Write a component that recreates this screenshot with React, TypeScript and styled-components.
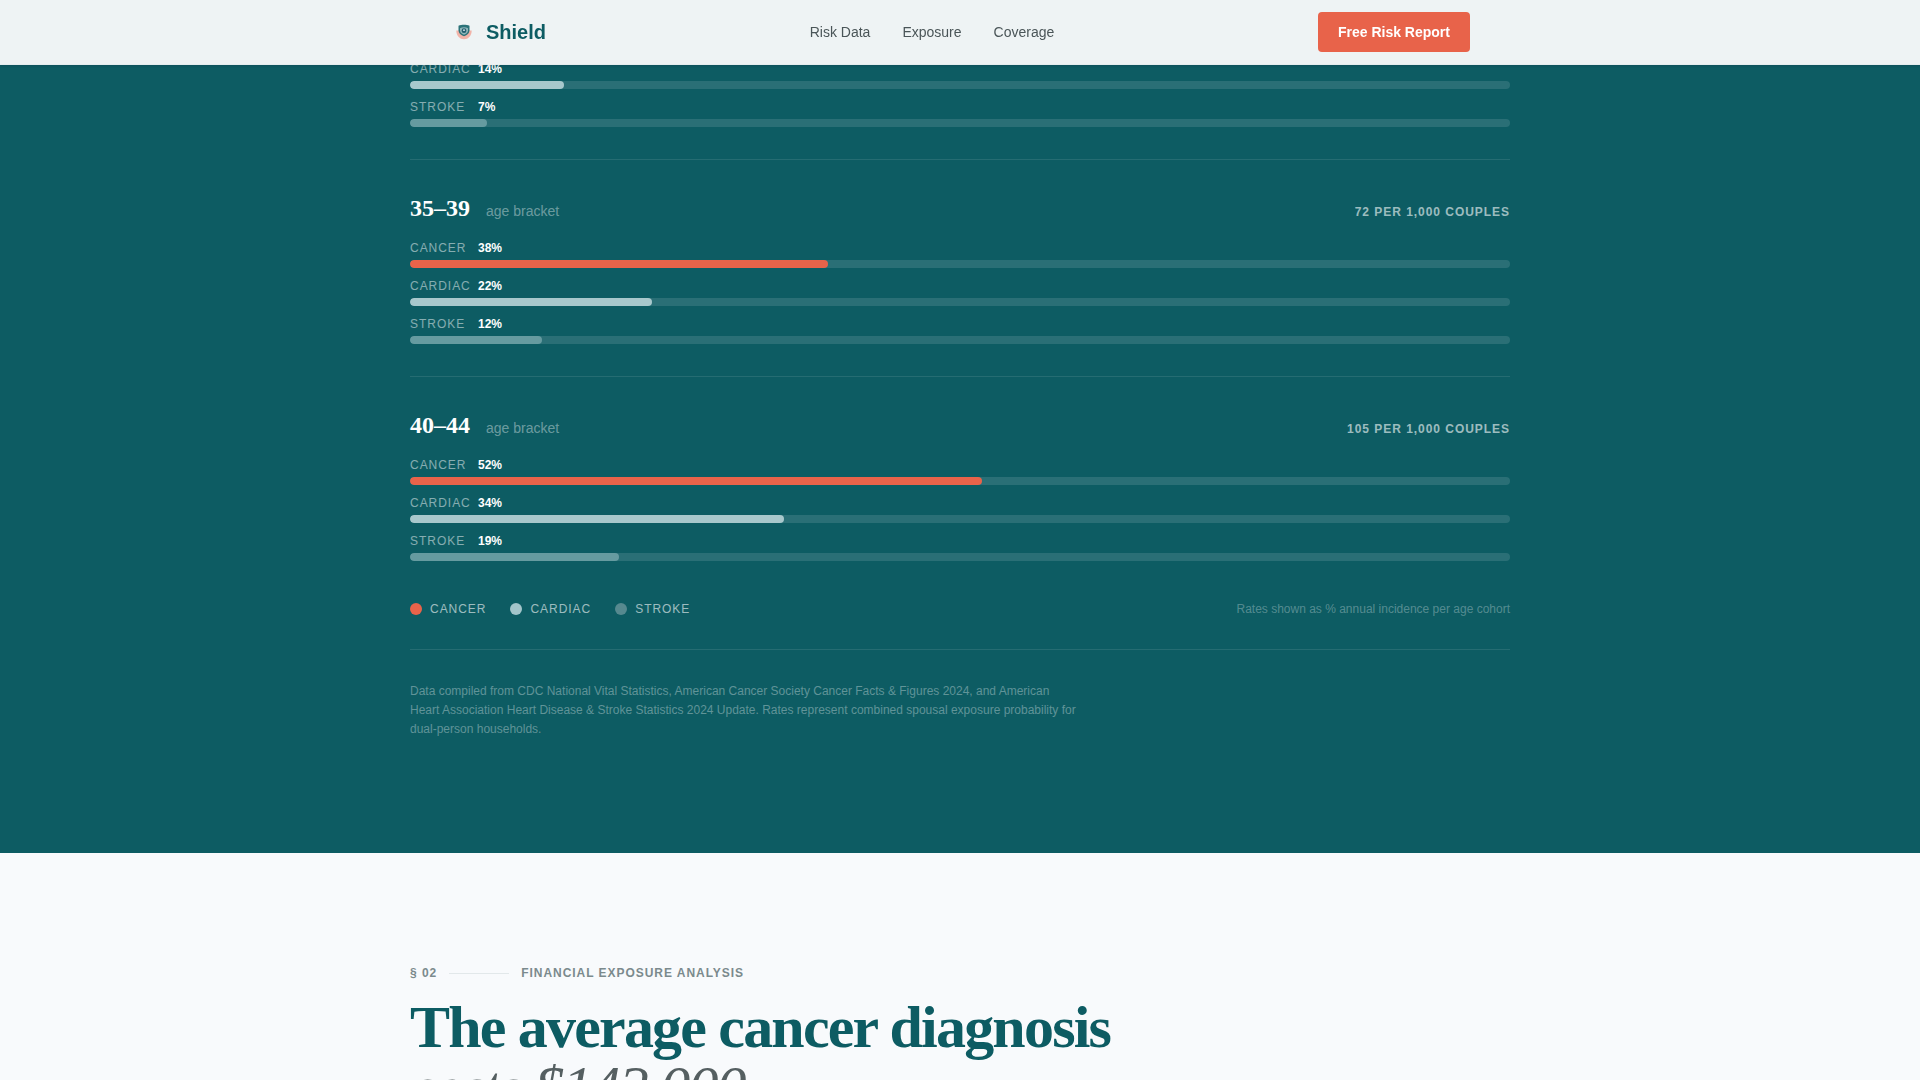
import React from "react";
import styled, { createGlobalStyle } from "styled-components";

const sans = `"Liberation Sans", Arial, sans-serif`;
const serif = `"Liberation Serif", "Times New Roman", serif`;

const teal = "#0d5c63";
const coral = "#e8634a";

const GlobalStyle = createGlobalStyle`
  *, *::before, *::after { box-sizing: border-box; }
  html { overflow: hidden; }
  body {
    margin: 0;
    height: 100vh;
    overflow: hidden;
    background: #f8fafc;
    font-family: ${sans};
    font-size: 16px;
    line-height: 24px;
  }
  h2, h3, p, ul { margin: 0; padding: 0; }
  ul { list-style: none; }
`;

const NavBar = styled.header`
  position: fixed;
  inset: 0 0 auto 0;
  z-index: 10;
  background: rgba(248, 250, 250, 0.96);
  border-bottom: 1px solid rgba(13, 92, 99, 0.04);
  box-shadow: 0 1px 2px rgba(20, 30, 60, 0.2);
`;

const NavInner = styled.div`
  display: flex;
  align-items: center;
  justify-content: space-between;
  max-width: 1100px;
  margin: 0 auto;
  padding: 12px 40px;
`;

const Brand = styled.a`
  display: flex;
  align-items: center;
  gap: 8px;
  color: ${teal};
  font-size: 20px;
  font-weight: 700;
  line-height: 28px;
  text-decoration: none;
`;

const NavLinks = styled.nav`
  display: flex;
  gap: 32px;
`;

const NavLink = styled.a`
  color: #4a5558;
  font-size: 14px;
  line-height: 20px;
  text-decoration: none;
`;

const ReportButton = styled.button`
  height: 40px;
  padding: 0 20px;
  border: 0;
  border-radius: 4px;
  background: ${coral};
  color: #fff;
  font-family: inherit;
  font-size: 14px;
  font-weight: 700;
  cursor: pointer;
`;

const RiskSection = styled.section`
  padding: 59px 40px 114px;
  background: ${teal};
`;

const Container = styled.div`
  max-width: 1100px;
  margin: 0 auto;
`;

const Bracket = styled.article`
  padding-bottom: 32px;
  border-bottom: 1px solid rgba(255, 255, 255, 0.1);

  & + & { padding-top: 32px; }
  &:last-of-type { padding-bottom: 0; border-bottom: 0; }
`;

const BracketHead = styled.div`
  display: flex;
  align-items: baseline;
  gap: 16px;
  margin-bottom: 14px;
`;

const BracketTitle = styled.h3`
  color: #fff;
  font-family: ${serif};
  font-size: 24px;
  font-weight: 700;
  line-height: 32px;
`;

const BracketHint = styled.span`
  color: rgba(255, 255, 255, 0.4);
  font-size: 14px;
  line-height: 20px;
`;

const BracketTotal = styled.span`
  margin-left: auto;
  color: rgba(255, 255, 255, 0.6);
  font-size: 12px;
  font-weight: 700;
  letter-spacing: 0.08em;
  line-height: 20px;
  text-transform: uppercase;
`;

const Rates = styled.div`
  display: grid;
  gap: 8px;
`;

const RateLabel = styled.div`
  display: flex;
  gap: 8px;
  margin-bottom: 2px;
  font-size: 12px;
  line-height: 20px;
`;

const RateName = styled.span`
  width: 60px;
  color: rgba(255, 255, 255, 0.5);
  letter-spacing: 0.08em;
  text-transform: uppercase;
`;

const RateValue = styled.strong`
  color: #fff;
`;

const Track = styled.div`
  height: 8px;
  overflow: hidden;
  border-radius: 4px;
  background: rgba(255, 255, 255, 0.12);
`;

const Fill = styled.div<{ $color: string }>`
  height: 100%;
  border-radius: 4px;
  background: ${(p) => p.$color};
`;

const LegendRow = styled.div`
  display: flex;
  align-items: center;
  justify-content: space-between;
  margin-top: 40px;
  padding-bottom: 32px;
  border-bottom: 1px solid rgba(255, 255, 255, 0.1);
  font-size: 12px;
  line-height: 16px;
`;

const Legend = styled.ul`
  display: flex;
  gap: 24px;
`;

const LegendItem = styled.li`
  display: flex;
  align-items: center;
  gap: 8px;
  color: rgba(255, 255, 255, 0.6);
  letter-spacing: 0.08em;
  text-transform: uppercase;
`;

const Dot = styled.span<{ $color: string }>`
  width: 12px;
  height: 12px;
  border-radius: 50%;
  background: ${(p) => p.$color};
`;

const LegendNote = styled.span`
  color: rgba(255, 255, 255, 0.3);
`;

const Sources = styled.p`
  max-width: 672px;
  padding-top: 32px;
  color: rgba(255, 255, 255, 0.35);
  font-size: 12px;
  line-height: 19px;
`;

const ExposureSection = styled.section`
  padding: 112px 40px;
  background: #f8fafc;
`;

const Eyebrow = styled.div`
  display: flex;
  align-items: center;
  gap: 12px;
  margin-bottom: 16px;
  color: #7b8a8d;
  font-size: 12px;
  font-weight: 700;
  letter-spacing: 0.08em;
  line-height: 16px;
  text-transform: uppercase;
`;

const Rule = styled.span`
  width: 60px;
  height: 1px;
  background: #e2e8ea;
`;

const Headline = styled.h2`
  color: ${teal};
  font-family: ${serif};
  font-size: 60px;
  font-weight: 700;
  letter-spacing: -0.03em;
  line-height: 60px;
`;

const HeadlineAccent = styled.em`
  display: block;
  color: #555f61;
  font-weight: 400;
`;

type Kind = "cancer" | "cardiac" | "stroke";

const colors: Record<Kind, string> = {
  cancer: coral,
  cardiac: "#a8c8cc",
  stroke: "#669ba0",
};

const dotColors: Record<Kind, string> = {
  cancer: coral,
  cardiac: "#a2c5ca",
  stroke: "#56898f",
};

const kinds: Kind[] = ["cancer", "cardiac", "stroke"];

interface BracketData {
  ages?: string;
  total?: string;
  rates: { kind: Kind; value: number }[];
}

const brackets: BracketData[] = [
  {
    rates: [
      { kind: "cardiac", value: 14 },
      { kind: "stroke", value: 7 },
    ],
  },
  {
    ages: "35–39",
    total: "72 per 1,000 couples",
    rates: [
      { kind: "cancer", value: 38 },
      { kind: "cardiac", value: 22 },
      { kind: "stroke", value: 12 },
    ],
  },
  {
    ages: "40–44",
    total: "105 per 1,000 couples",
    rates: [
      { kind: "cancer", value: 52 },
      { kind: "cardiac", value: 34 },
      { kind: "stroke", value: 19 },
    ],
  },
];

function ShieldLogo() {
  return (
    <svg width="28" height="28" viewBox="0 0 28 28" aria-hidden="true">
      <path d="M6.300 12.500c0 5 3.300 8.800 7.700 8.800s7.700-3.800 7.700-8.800z" fill="#f1b3a8" />
      <path d="M14 6.700c-2 0-4 .3-5.500 1v4.500c0 3 2.300 5 5.500 6 3.200-1 5.500-3 5.500-6V7.700c-1.500-.7-3.500-1-5.500-1z" fill="#2b7278" />
      <path d="M10 10.200c1.200-.6 2.500-.9 4-.9s2.800.3 4 .9v2.300c0 2-1.600 3.400-4 4.200-2.400-.8-4-2.200-4-4.200z" fill="#8fb5b9" />
      <circle cx="14" cy="12.700" r="2.400" fill="#245f70" />
      <circle cx="14" cy="12.200" r="0.900" fill="#d7e8ea" />
    </svg>
  );
}

function RateRow({ kind, value }: { kind: Kind; value: number }) {
  return (
    <div>
      <RateLabel>
        <RateName>{kind}</RateName>
        <RateValue>{value}%</RateValue>
      </RateLabel>
      <Track>
        <Fill $color={colors[kind]} style={{ width: `${value}%` }} />
      </Track>
    </div>
  );
}

export default function App() {
  return (
    <>
      <GlobalStyle />
      <NavBar>
        <NavInner>
          <Brand href="#top">
            <ShieldLogo />
            Shield
          </Brand>
          <NavLinks>
            <NavLink href="#risk">Risk Data</NavLink>
            <NavLink href="#exposure">Exposure</NavLink>
            <NavLink href="#coverage">Coverage</NavLink>
          </NavLinks>
          <ReportButton type="button">Free Risk Report</ReportButton>
        </NavInner>
      </NavBar>
      <main>
        <RiskSection id="risk">
          <Container>
            {brackets.map((b, i) => (
              <Bracket key={i}>
                {b.ages && (
                  <BracketHead>
                    <BracketTitle>{b.ages}</BracketTitle>
                    <BracketHint>age bracket</BracketHint>
                    <BracketTotal>{b.total}</BracketTotal>
                  </BracketHead>
                )}
                <Rates>
                  {b.rates.map((r) => (
                    <RateRow key={r.kind} kind={r.kind} value={r.value} />
                  ))}
                </Rates>
              </Bracket>
            ))}
            <LegendRow>
              <Legend>
                {kinds.map((k) => (
                  <LegendItem key={k}>
                    <Dot $color={dotColors[k]} />
                    {k}
                  </LegendItem>
                ))}
              </Legend>
              <LegendNote>Rates shown as % annual incidence per age cohort</LegendNote>
            </LegendRow>
            <Sources>
              Data compiled from CDC National Vital Statistics, American Cancer Society Cancer Facts &amp; Figures
              2024, and American Heart Association Heart Disease &amp; Stroke Statistics 2024 Update. Rates represent
              combined spousal exposure probability for dual-person households.
            </Sources>
          </Container>
        </RiskSection>
        <ExposureSection id="exposure">
          <Container>
            <Eyebrow>
              <span>§ 02</span>
              <Rule />
              <span>Financial Exposure Analysis</span>
            </Eyebrow>
            <Headline>
              The average cancer diagnosis
              <HeadlineAccent>costs $142,000</HeadlineAccent>
            </Headline>
          </Container>
        </ExposureSection>
      </main>
    </>
  );
}
